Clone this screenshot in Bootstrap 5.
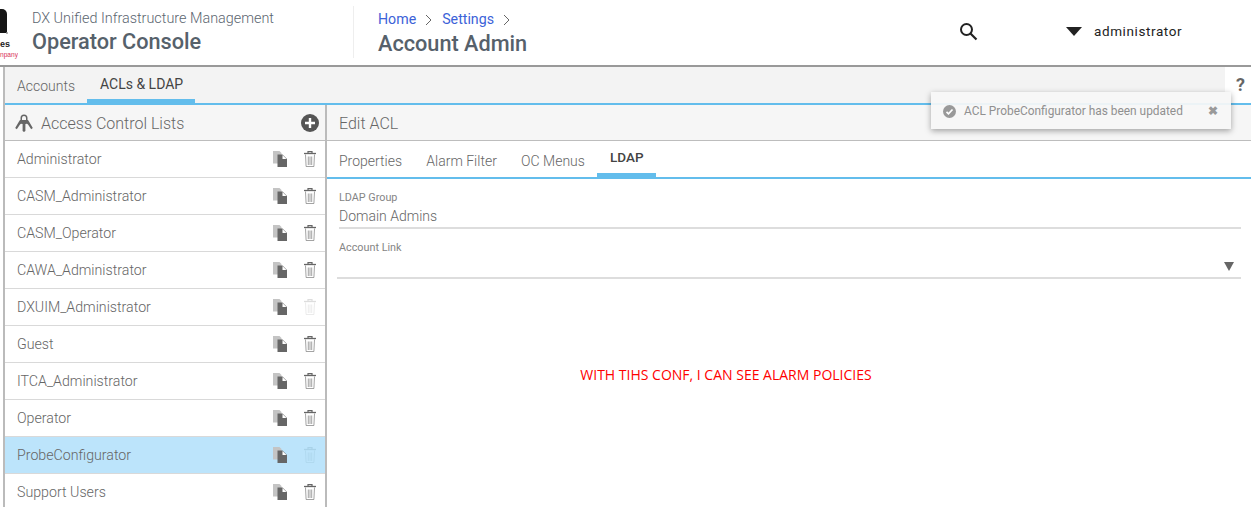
<!DOCTYPE html>
<html lang="en">
<head>
<meta charset="utf-8">
<title>Account Admin</title>
<link rel="stylesheet" href="https://cdn.jsdelivr.net/npm/bootstrap@5.3.0/dist/css/bootstrap.min.css">
<style>
html,body{height:507px;overflow:hidden;background:#fff}
body{font-family:Roboto,"Liberation Sans",sans-serif;color:#5f6368;font-weight:300;position:relative}
.hdr{height:65px}
.logo-box{width:18px;height:65px;overflow:hidden;position:relative;flex:none}
.logo-a{position:absolute;left:0;top:9px;width:7px;height:24px;background:#151515;border-top-right-radius:5px}
.logo-r{position:absolute;left:6px;top:32px;width:2px;height:2px;background:#999;border-radius:50%}
.logo-b{position:absolute;left:0;top:39px;font:700 9px/11px "Liberation Sans",sans-serif;color:#222}
.logo-c{position:absolute;left:0;top:50px;font:400 6.600px/10px "Liberation Sans",sans-serif;color:#d8315b;white-space:nowrap}
.brand{width:335px;padding-left:14px;flex:none}
.brand-top{font-size:14.4px;line-height:18px;margin-top:10px;color:#5c6670;font-weight:300}
.brand-main{font-size:21.7px;line-height:26px;margin-top:1px;color:#56616b;font-weight:500}
.crumbs{border-left:1px solid #eee;height:52px;margin-top:6px;padding-left:24px;flex:none;width:600px}
.crumb-line{font-size:14.2px;line-height:18px;margin-top:4px;color:#666;font-weight:300}
.crumb-line a{color:#3c62d8;text-decoration:none;font-weight:400}
.chev{margin:0 10px 1px 9px}
.crumb-main{font-size:21.7px;line-height:26px;margin-top:3px;color:#56616b;font-weight:500}
.user-area{font-size:13.5px;font-weight:400;color:#222;letter-spacing:.6px}
.srch{margin:22px 0 0 6px}
.usr{margin:23px 0 0 88px;line-height:16px}
.usr-arrow{width:0;height:0;border-left:8.5px solid transparent;border-right:8.5px solid transparent;border-top:9px solid #222;margin-right:12px;margin-top:4px}
.frame{border-top:2px solid #999;height:442px;padding-left:3px}
.frame-in{border-left:2px solid #bbb;height:100%}
.tabbar{height:38px;background:#f3f3f3;border-bottom:2px solid #63bdec}
.tab-a,.tab-b{font-size:14px;line-height:18px;display:block;text-decoration:none}
.tab-a{padding:10px 0 0 12px;width:82px;font-weight:300;color:#666}
.tab-b{padding:8px 0 0 13px;width:108px;height:36px;border-bottom:4px solid #63bdec;color:#444;font-weight:400;white-space:nowrap}
.help{width:26px;height:36px;background:#fff;margin-left:auto;font-weight:700;font-size:18px;color:#666;text-align:center;line-height:36px;padding-left:5px;flex:none}
.lft{width:322px;border-right:2px solid #bbb;flex:none}
.pan-head{height:36px;background:#f6f6f6;border-bottom:1px solid #bdbdbd;font-size:16px;line-height:37px;color:#666}
.lh{padding:0 6px 0 10px}
.lh span{margin-left:8px;padding-top:1px}
.rgt{flex:1 1 auto;min-width:0}
.rgt .pan-head{padding-left:12px}
.row-item{height:37px;border-bottom:1px solid #d9d9d9;padding:0 9px 0 12px;font-size:14.2px;color:#666;line-height:37px}
.row-item.sel{background:#bce4fb}
.ico{display:flex;gap:17px;margin-top:10px;height:16px}
.subtabs{height:38px;border-bottom:2px solid #63bdec;padding-left:12px;font-size:14px;color:#666}
.st{padding-top:11px;margin-right:24.200px;line-height:18px}
.st-on{padding:7px 0 0 13px;margin-left:-12px;width:59px;height:36px;border-bottom:4px solid #63bdec;font-weight:500;line-height:18px;color:#444;font-size:13.5px}
.fld{margin:13px 10px 0 12px}
.fld-b{margin:13px 10px 0 10px}
.lbl{font-size:10.8px;line-height:12px;color:#858585;font-weight:400}
.fld-b .lbl{padding-left:2px}
.val{font-size:14px;line-height:18px;border-bottom:2px solid #ddd;color:#666;padding-top:3px;height:20px;box-sizing:content-box}
.fld-b .val{padding-right:7px;padding-top:1px;height:22px}
.note{color:#f00;font-family:"Open Sans","Liberation Sans",sans-serif;font-size:14px;font-weight:400;text-align:center;width:400px;margin:87px 0 0 199px;line-height:18px}
.toast-x{position:absolute;left:931px;top:92px;width:300px;height:37px;background:rgba(246,246,246,.93);box-shadow:0 2px 6px rgba(0,0,0,.35);color:#909090;font-size:11.9px;font-weight:400;padding:1px 13px 0 12px;line-height:36px}
.toast-x b{color:#9a9a9a;font-size:12px}
.ddarrow{width:0;height:0;border-left:5px solid transparent;border-right:5px solid transparent;border-top:9px solid #666}
</style>
</head>
<body>
<svg width="0" height="0" class="position-absolute">
<defs>
<symbol id="i-copy" viewBox="0 0 14 16"><path d="M0 0h6.500l2 2V12.500H0z" fill="#c4c4c4"/><path d="M4.500 3.500H9.500L14 8V16H4.500z" fill="#666"/><path d="M9.500 4V8H13.500z" fill="#fff"/></symbol>
<symbol id="i-trash" viewBox="0 0 12 16"><path d="M0 2.500h12" stroke="currentColor" stroke-width="1.300"/><path d="M4 2.500V.7h4v1.800" fill="none" stroke="currentColor" stroke-width="1.200"/><path d="M1.500 3.500l.6 12h7.800l.6-12M4.300 5.500v8.500M6 5.500v8.500M7.700 5.500v8.500" fill="none" stroke="currentColor" stroke-opacity=".6" stroke-width="1"/></symbol>
</defs>
</svg>
<div class="hdr d-flex">
  <div class="logo-box"><div class="logo-a"></div><div class="logo-r"></div><div class="logo-b">es</div><div class="logo-c">npany</div></div>
  <div class="brand"><div class="brand-top">DX Unified Infrastructure Management</div><div class="brand-main">Operator Console</div></div>
  <div class="crumbs"><div class="crumb-line"><a href="#">Home</a><svg class="chev" width="7" height="12" viewBox="0 0 7 12"><path d="M1 1l5 5-5 5" fill="none" stroke="#666"/></svg><a href="#">Settings</a><svg class="chev" width="7" height="12" viewBox="0 0 7 12"><path d="M1 1l5 5-5 5" fill="none" stroke="#666"/></svg></div><div class="crumb-main">Account Admin</div></div>
  <div class="user-area d-flex">
    <svg class="srch" width="19" height="19" viewBox="0 0 19 19"><circle cx="7.500" cy="7.500" r="5.500" fill="none" stroke="#222" stroke-width="2"/><path d="M11.500 11.500l6 6" stroke="#222" stroke-width="2.200"/></svg>
    <div class="usr d-flex"><div class="usr-arrow"></div><span>administrator</span></div>
  </div>
</div>
<div class="frame"><div class="frame-in">
  <div class="tabbar d-flex"><a class="tab-a">Accounts</a><a class="tab-b">ACLs &amp; LDAP</a><div class="help">?</div></div>
  <div class="d-flex">
    <div class="lft">
      <div class="pan-head lh d-flex align-items-center justify-content-between">
        <div class="d-flex align-items-center">
          <svg width="18" height="18" viewBox="0 0 18 18" fill="#666"><path d="M5.500 7V4a3.500 3.500 0 0 1 7 0v3h-1.500V4a2 2 0 0 0-4 0v3z"/><path d="M5 6h8l1 1.500L17.800 14l-1.600 1.300L13 10.500 12 9.800 10.400 10v7l-1.400 1-1.400-1v-7L6 9.800 5 10.500 1.800 15.300.2 14 4 7.500z"/></svg>
          <span>Access Control Lists</span>
        </div>
        <svg width="18" height="18" viewBox="0 0 18 18"><circle cx="9" cy="9" r="9" fill="#555"/><path d="M9 4v10M4 9h10" stroke="#fff" stroke-width="2.400"/></svg>
      </div>
      <div class="row-item d-flex justify-content-between"><span>Administrator</span><div class="ico"><svg width="14" height="16"><use href="#i-copy"/></svg><svg width="12" height="16" style="color:#666"><use href="#i-trash"/></svg></div></div>
      <div class="row-item d-flex justify-content-between"><span>CASM_Administrator</span><div class="ico"><svg width="14" height="16"><use href="#i-copy"/></svg><svg width="12" height="16" style="color:#666"><use href="#i-trash"/></svg></div></div>
      <div class="row-item d-flex justify-content-between"><span>CASM_Operator</span><div class="ico"><svg width="14" height="16"><use href="#i-copy"/></svg><svg width="12" height="16" style="color:#666"><use href="#i-trash"/></svg></div></div>
      <div class="row-item d-flex justify-content-between"><span>CAWA_Administrator</span><div class="ico"><svg width="14" height="16"><use href="#i-copy"/></svg><svg width="12" height="16" style="color:#666"><use href="#i-trash"/></svg></div></div>
      <div class="row-item d-flex justify-content-between"><span>DXUIM_Administrator</span><div class="ico"><svg width="14" height="16"><use href="#i-copy"/></svg><svg width="12" height="16" style="color:#ddd"><use href="#i-trash"/></svg></div></div>
      <div class="row-item d-flex justify-content-between"><span>Guest</span><div class="ico"><svg width="14" height="16"><use href="#i-copy"/></svg><svg width="12" height="16" style="color:#666"><use href="#i-trash"/></svg></div></div>
      <div class="row-item d-flex justify-content-between"><span>ITCA_Administrator</span><div class="ico"><svg width="14" height="16"><use href="#i-copy"/></svg><svg width="12" height="16" style="color:#666"><use href="#i-trash"/></svg></div></div>
      <div class="row-item d-flex justify-content-between"><span>Operator</span><div class="ico"><svg width="14" height="16"><use href="#i-copy"/></svg><svg width="12" height="16" style="color:#666"><use href="#i-trash"/></svg></div></div>
      <div class="row-item sel d-flex justify-content-between"><span>ProbeConfigurator</span><div class="ico"><svg width="14" height="16"><use href="#i-copy"/></svg><svg width="12" height="16" style="color:#a8d2e8"><use href="#i-trash"/></svg></div></div>
      <div class="row-item d-flex justify-content-between"><span>Support Users</span><div class="ico"><svg width="14" height="16"><use href="#i-copy"/></svg><svg width="12" height="16" style="color:#666"><use href="#i-trash"/></svg></div></div>
    </div>
    <div class="rgt">
      <div class="pan-head">Edit ACL</div>
      <div class="subtabs d-flex"><div class="st">Properties</div><div class="st">Alarm Filter</div><div class="st">OC Menus</div><div class="st-on">LDAP</div></div>
      <div class="fld"><div class="lbl">LDAP Group</div><div class="val">Domain Admins</div></div>
      <div class="fld-b"><div class="lbl">Account Link</div><div class="val d-flex justify-content-end align-items-center"><div class="ddarrow"></div></div></div>
      <div class="note">WITH TIHS CONF, I CAN SEE ALARM POLICIES</div>
    </div>
  </div>
</div></div>
<div class="toast-x d-flex align-items-center justify-content-between">
  <div class="d-flex align-items-center gap-2"><svg width="13" height="13" viewBox="0 0 13 13"><circle cx="6.500" cy="6.500" r="6.500" fill="#999"/><path d="M3.500 6.800l2 2 4-4.300" fill="none" stroke="#fff" stroke-width="1.700"/></svg><span>ACL ProbeConfigurator has been updated</span></div>
  <b>✖</b>
</div>
<script src="https://cdn.jsdelivr.net/npm/bootstrap@5.3.0/dist/js/bootstrap.bundle.min.js"></script>
</body>
</html>
